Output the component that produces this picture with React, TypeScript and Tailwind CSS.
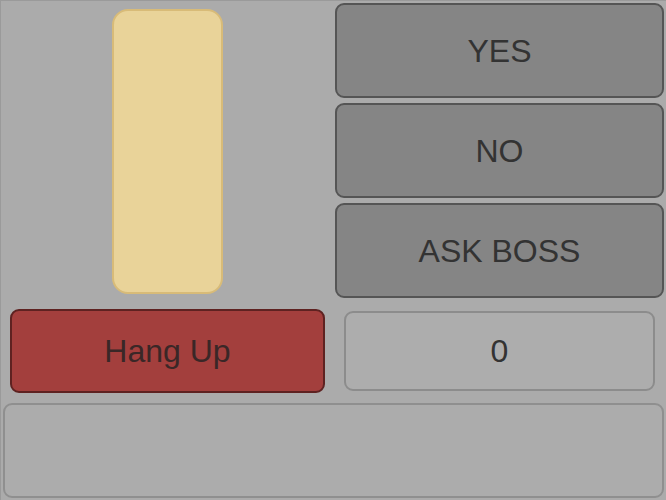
import React from "react";

const choices = ["YES", "NO", "ASK BOSS"];

export default function App() {
  return (
    <div
      className="w-[666px] h-[500px] bg-[#ababab] border-l border-t border-[#9a9a9a] flex flex-col text-[32px] text-[#333333]"
      style={{ fontFamily: '"Liberation Sans", Arial, sans-serif' }}
    >
      <div className="flex h-[300px]">
        <div className="w-[333px] flex items-start justify-center pt-[8px]">
          <div className="w-[111px] h-[285px] rounded-[16px] bg-[#e9d399] border-2 border-[#d8bb78]" />
        </div>
        <div className="flex-1 flex flex-col gap-[5px] pt-[2px] pl-[1px] pr-[2px]">
          {choices.map((c) => (
            <button
              key={c}
              className="h-[95px] rounded-[9px] bg-[#858585] border-2 border-[#555555] flex items-center justify-center leading-none"
            >
              {c}
            </button>
          ))}
        </div>
      </div>
      <div className="flex h-[100px] items-center">
        <div className="w-[333px] px-[9px]">
          <button className="w-full h-[84px] rounded-[9px] bg-[#a33f3d] border-2 border-[#5e2221] text-[#3a2727] flex items-center justify-center leading-none">
            Hang Up
          </button>
        </div>
        <div className="flex-1 pl-[10px] pr-[11px]">
          <div className="h-[80px] rounded-[9px] bg-[#adadad] border-2 border-[#8c8c8c] flex items-center justify-center leading-none">
            0
          </div>
        </div>
      </div>
      <div className="px-[2px] pt-[2px] pb-[2px] flex-1 flex">
        <div className="flex-1 rounded-[9px] border-2 border-[#8f8f8f] bg-[#acacac]" />
      </div>
    </div>
  );
}
